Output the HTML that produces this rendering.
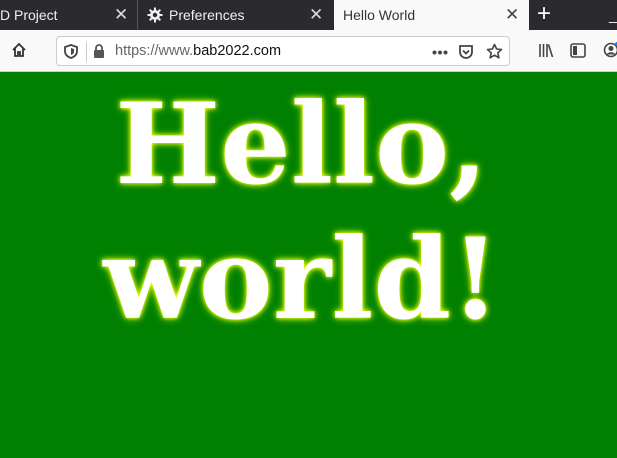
<!DOCTYPE html>
<html><head><meta charset="utf-8"><style>
*{margin:0;padding:0;box-sizing:border-box}
body{width:617px;height:458px;overflow:hidden;background:#008000;font-family:"Liberation Sans","DejaVu Sans",sans-serif;position:relative}
.tabs{position:absolute;top:0;left:0;width:617px;height:30px;background:#2b2a2e;color:#f0f0f0;font-size:14px}
.tab{position:absolute;top:0;height:30px;line-height:30px}
.sep{position:absolute;top:0;width:1px;height:30px;background:#555}
.x{position:absolute;top:0;font-size:17px;line-height:30px;color:#ddd}
.active{position:absolute;left:334px;top:0;width:195px;height:31px;background:#f9f9fa;color:#333}
.toolbar{position:absolute;top:30px;left:0;width:617px;height:42px;background:#f9f9fa;border-bottom:1px solid #ccc}
.url{position:absolute;left:56px;top:6px;width:454px;height:30px;background:#fff;border:1px solid #ccc;border-radius:4px}
.urltext{position:absolute;font-size:14.5px;color:#666}
.urltext b{font-weight:normal;color:#111}
.h{position:absolute;left:0;top:78px;width:603px;text-align:center;font-family:"DejaVu Serif",serif;font-weight:bold;font-size:111px;line-height:135px;color:#fff;text-shadow:0 0 4px #ff0,0 0 8px #cf0}
</style></head><body>
<div class="tabs">
 <div class="tab" style="left:0">D Project</div>
 <div class="x" style="left:114px">✕</div>
 <div class="sep" style="left:137px"></div>
 <svg style="position:absolute;left:147px;top:7px" width="16" height="16" viewBox="0 0 16 16"><g fill="#eee"><circle cx="8" cy="8" r="5"/><rect x="7" y="0.5" width="2" height="15"/><rect x="0.5" y="7" width="15" height="2"/><rect x="7" y="0.5" width="2" height="15" transform="rotate(45 8 8)"/><rect x="7" y="0.5" width="2" height="15" transform="rotate(-45 8 8)"/></g><circle cx="8" cy="8" r="2.2" fill="#2b2a2e"/></svg>
 <div class="tab" style="left:169px">Preferences</div>
 <div class="x" style="left:309px">✕</div>
 <div class="active">
  <div class="tab" style="left:9px">Hello World</div>
  <div class="x" style="left:171px;color:#444">✕</div>
 </div>
 <div class="tab" style="left:537px;font-size:24px;line-height:28px;color:#fff">+</div>
 <div class="tab" style="left:609px;color:#fff">_</div>
</div>
<div class="toolbar">
 <svg style="position:absolute;left:11px;top:12px" width="16" height="16" viewBox="0 0 16 16"><path d="M2 8 L8 2 L14 8 M4 6.5 V14 H7 V10 H9 V14 H12 V6.5" fill="none" stroke="#333" stroke-width="1.8"/></svg>
 <div class="url">
  <svg style="position:absolute;left:7px;top:7px" width="14" height="15" viewBox="0 0 14 15"><path d="M7 1 L13 3 V7 C13 11 10 13 7 14 C4 13 1 11 1 7 V3 Z" fill="none" stroke="#444" stroke-width="1.8"/><path d="M7 4 L10 5 V7.5 C10 9.5 8.5 10.5 7 11Z" fill="#444"/></svg>
  <div style="position:absolute;left:29px;top:5px;width:1px;height:20px;background:#ccc"></div>
  <svg style="position:absolute;left:36px;top:7px" width="12" height="14" viewBox="0 0 12 14"><path d="M3 6 V4 A3 3 0 0 1 9 4 V6" fill="none" stroke="#555" stroke-width="1.8"/><rect x="1" y="6" width="10" height="8" rx="1" fill="#555"/></svg>
  <svg style="position:absolute;left:375px;top:13px" width="16" height="5"><circle cx="2.5" cy="2.5" r="2" fill="#444"/><circle cx="8" cy="2.5" r="2" fill="#444"/><circle cx="13.5" cy="2.5" r="2" fill="#444"/></svg>
  <svg style="position:absolute;left:401px;top:7px" width="16" height="16" viewBox="0 0 16 16"><path d="M2 2 H14 V8 A6 6 0 0 1 2 8 Z" fill="none" stroke="#444" stroke-width="1.8"/><path d="M5 6.5 L8 9.5 L11 6.5" fill="none" stroke="#444" stroke-width="1.8"/></svg>
  <svg style="position:absolute;left:429px;top:6px" width="17" height="17" viewBox="0 0 17 17"><path d="M8.5 1.5 L10.6 6 L15.5 6.5 L11.8 9.8 L12.9 14.8 L8.5 12.2 L4.1 14.8 L5.2 9.8 L1.5 6.5 L6.4 6 Z" fill="none" stroke="#444" stroke-width="1.6" stroke-linejoin="round"/></svg>
 </div>
 <div class="urltext" style="left:115px;top:13px">https://www.<b>bab2022.com</b></div>
 <svg style="position:absolute;left:538px;top:13px" width="16" height="15" viewBox="0 0 16 15"><g stroke="#444" stroke-width="1.6"><path d="M2 1V14M5.5 1V14M9 1V14M10.5 1.5L14.5 14"/></g></svg>
 <svg style="position:absolute;left:570px;top:13px" width="16" height="15" viewBox="0 0 16 15"><rect x="1" y="1" width="14" height="13" rx="2" fill="none" stroke="#444" stroke-width="1.6"/><rect x="3" y="3" width="4" height="9" fill="#444"/></svg>
 <svg style="position:absolute;left:603px;top:12px" width="16" height="16" viewBox="0 0 16 16"><circle cx="8" cy="8" r="6.5" fill="none" stroke="#444" stroke-width="1.6"/><circle cx="8" cy="6.5" r="2.5" fill="#444"/><path d="M3.5 12.5 A5 4 0 0 1 12.5 12.5" fill="#444"/><circle cx="14" cy="2" r="2" fill="#0a84ff"/></svg>
</div>
<div class="h">Hello,<br>world!</div>
</body></html>
